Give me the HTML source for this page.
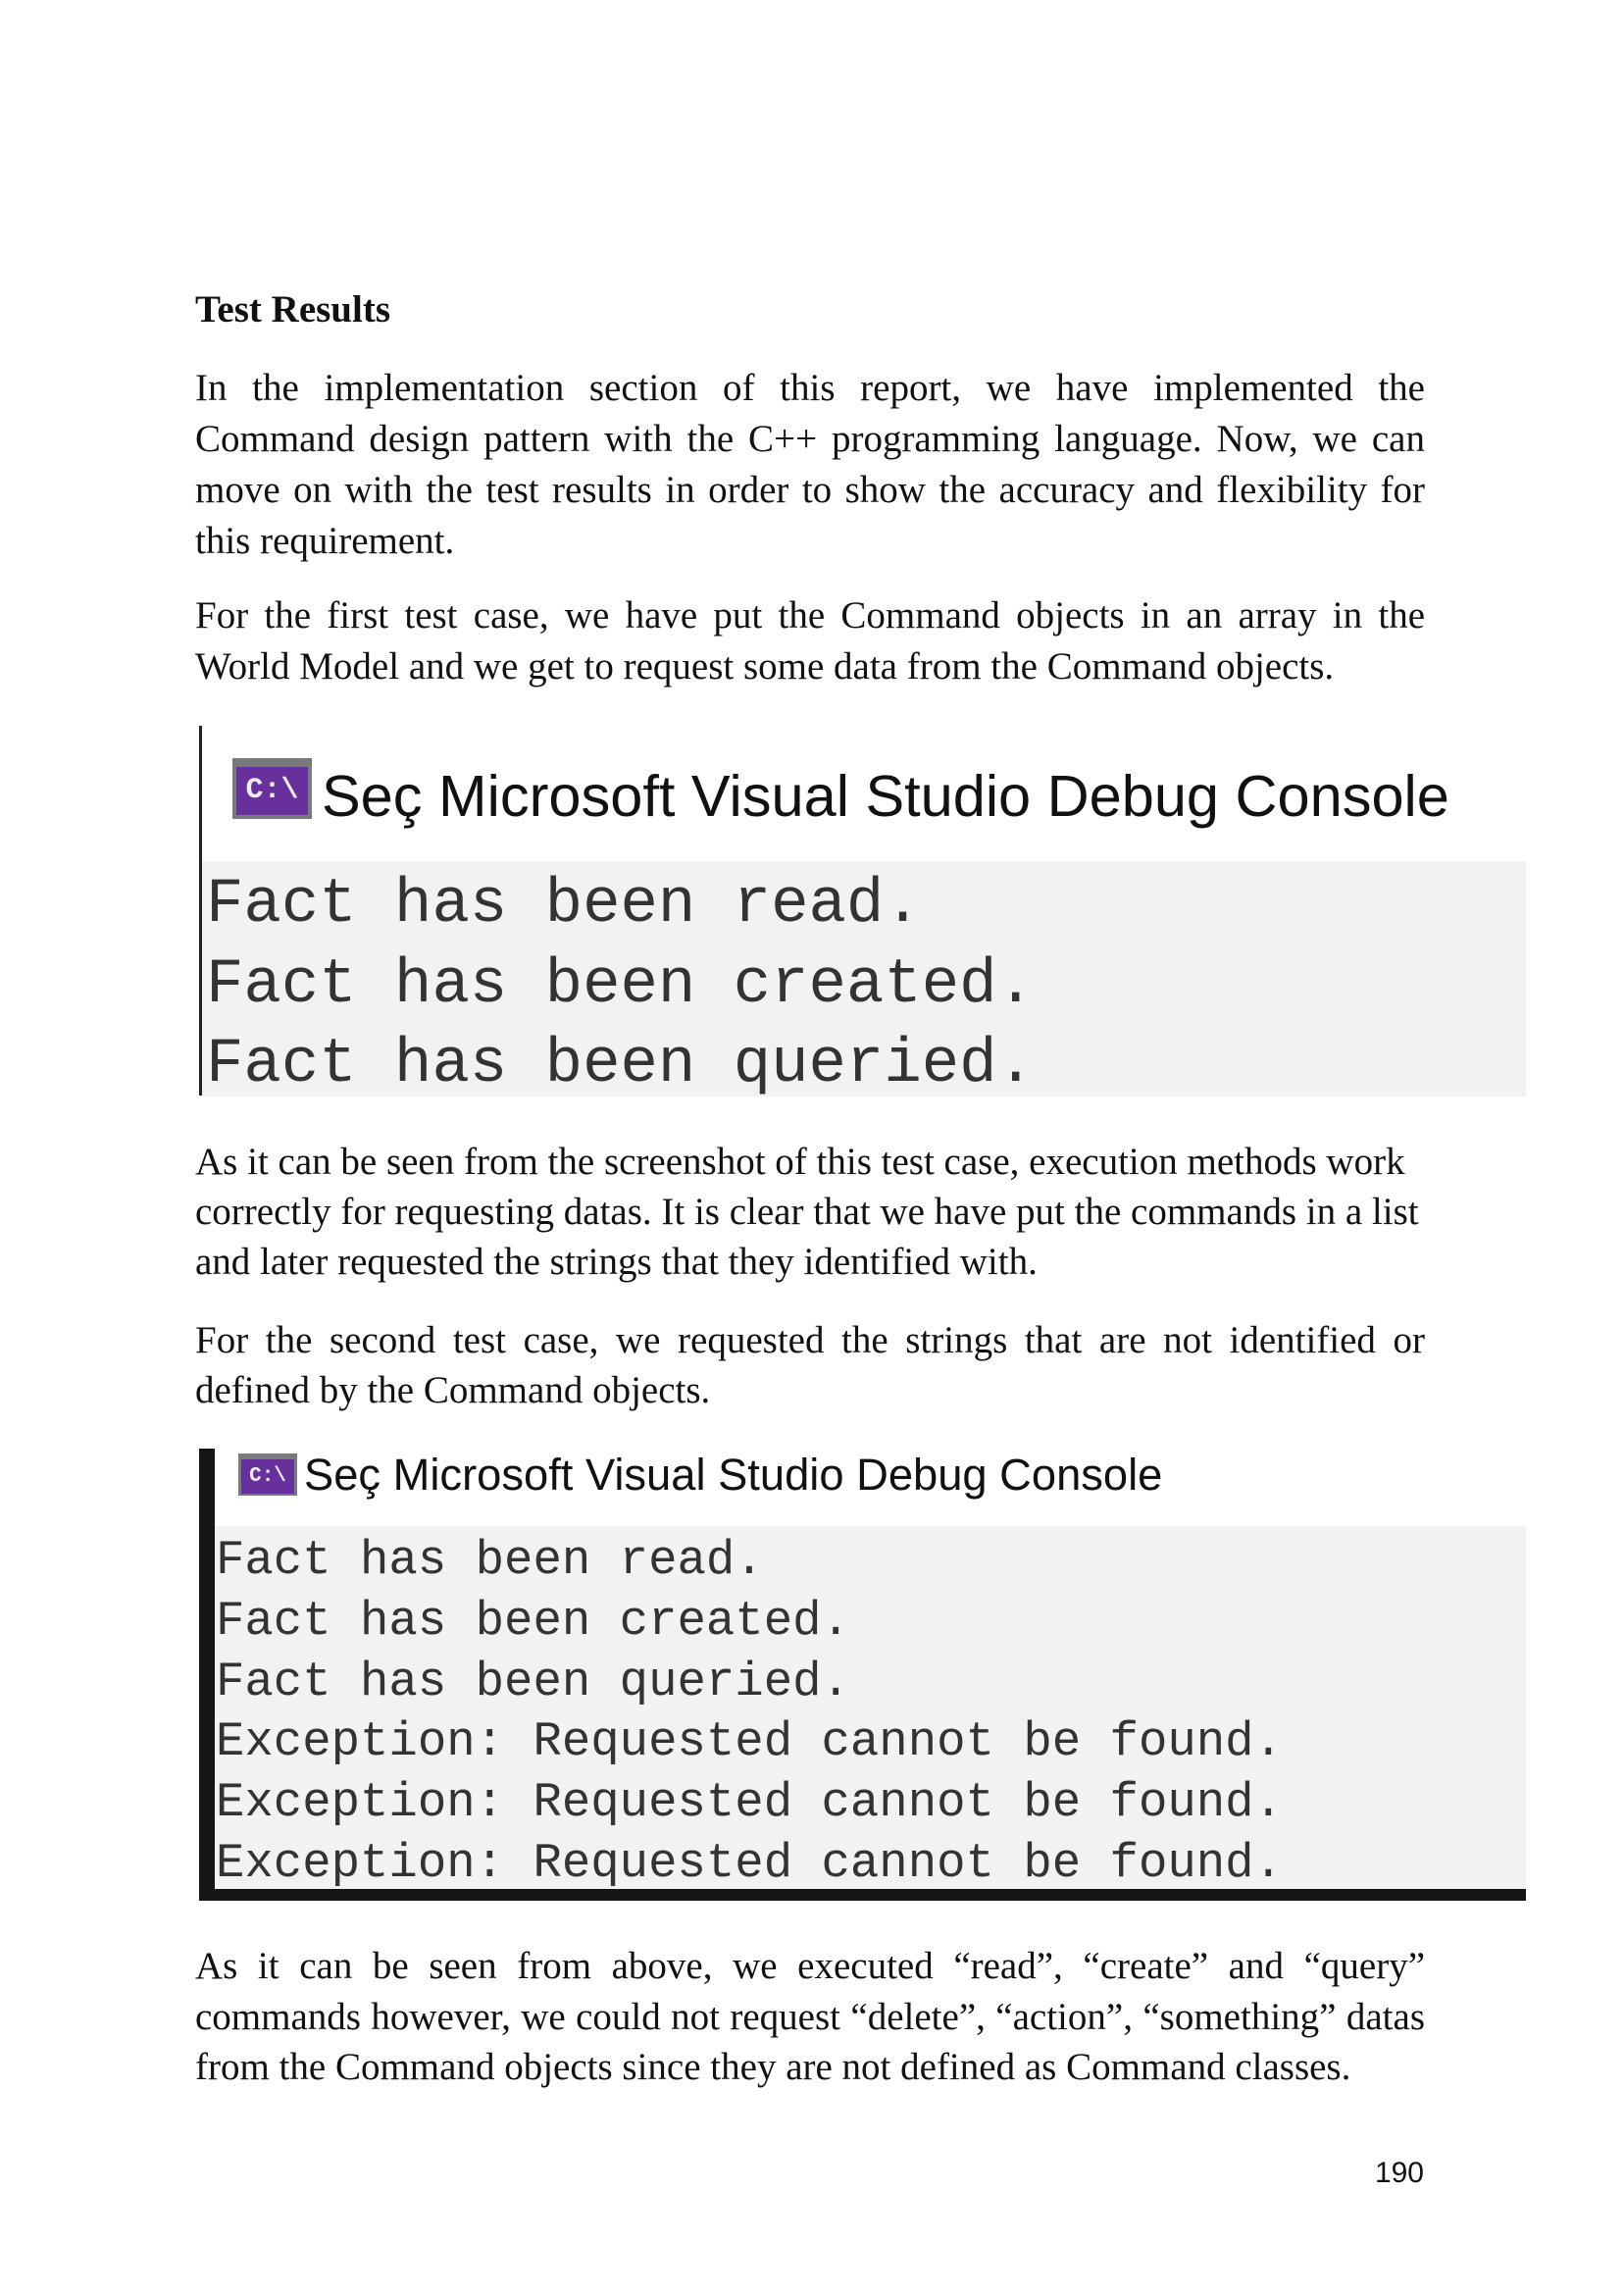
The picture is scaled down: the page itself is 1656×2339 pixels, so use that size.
<!DOCTYPE html>
<html><head><meta charset="utf-8"><style>
html,body{margin:0;padding:0;background:#fff}
body{width:1656px;height:2339px;position:relative;overflow:hidden;font-family:"Liberation Serif",serif;color:#111}
.l{position:absolute;left:199px;width:1254px;font-size:39px;line-height:52px;height:52px;white-space:nowrap}
.j{text-align:justify;text-align-last:justify;white-space:normal}
.h{font-weight:bold}
.bar{position:absolute;background:#222}
.gray{position:absolute;background:#f2f2f2}
.mono{position:absolute;font-family:"Liberation Mono",monospace;color:#333;white-space:pre}
.title{position:absolute;font-family:"Liberation Sans",sans-serif;color:#111;white-space:pre}
.icon{position:absolute;background:#7a7a7a;box-sizing:border-box}
.icon div{position:absolute;background:#68309c;color:#eee;font-family:"Liberation Mono",monospace;font-weight:bold;text-align:center}
</style></head><body>
<div class="l h" style="top:290px">Test Results</div>
<div class="l j" style="top:370px">In the implementation section of this report, we have implemented the</div>
<div class="l j" style="top:422px">Command design pattern with the C++ programming language. Now, we can</div>
<div class="l j" style="top:474px">move on with the test results in order to show the accuracy and flexibility for</div>
<div class="l" style="top:526px">this requirement.</div>
<div class="l j" style="top:602px">For the first test case, we have put the Command objects in an array in the</div>
<div class="l" style="top:654px">World Model and we get to request some data from the Command objects.</div>

<div class="bar" style="left:203px;top:740px;width:3px;height:377px"></div>
<div class="icon" style="left:237px;top:773px;width:81px;height:62px"><div style="left:4px;top:9px;width:73px;height:49px;font-size:30px;line-height:49px">C:\</div></div>
<div class="title" style="left:328px;top:776px;font-size:59.5px;line-height:72px">Seç Microsoft Visual Studio Debug Console</div>
<div class="gray" style="left:206px;top:878px;width:1350px;height:240px"></div>
<div class="mono" style="left:210px;top:883px;font-size:64px;line-height:81.5px">Fact has been read.
Fact has been created.
Fact has been queried.</div>

<div class="l" style="top:1159px">As it can be seen from the screenshot of this test case, execution methods work</div>
<div class="l" style="top:1210px">correctly for requesting datas. It is clear that we have put the commands in a list</div>
<div class="l" style="top:1261px">and later requested the strings that they identified with.</div>
<div class="l j" style="top:1341px">For the second test case, we requested the strings that are not identified or</div>
<div class="l" style="top:1392px">defined by the Command objects.</div>

<div class="bar" style="left:203px;top:1477px;width:16px;height:461px;background:#151515"></div>
<div class="bar" style="left:203px;top:1926px;width:1353px;height:12px;background:#151515"></div>
<div class="icon" style="left:243px;top:1482px;width:60px;height:43px"><div style="left:3px;top:6px;width:54px;height:35px;font-size:21px;line-height:35px">C:\</div></div>
<div class="title" style="left:310px;top:1476px;font-size:45.3px;line-height:56px">Seç Microsoft Visual Studio Debug Console</div>
<div class="gray" style="left:219px;top:1556px;width:1337px;height:370px"></div>
<div class="mono" style="left:220px;top:1561px;font-size:49px;line-height:61.8px">Fact has been read.
Fact has been created.
Fact has been queried.
Exception: Requested cannot be found.
Exception: Requested cannot be found.
Exception: Requested cannot be found.</div>

<div class="l j" style="top:1979px">As it can be seen from above, we executed “read”, “create” and “query”</div>
<div class="l j" style="top:2031px">commands however, we could not request “delete”, “action”, “something” datas</div>
<div class="l" style="top:2082px">from the Command objects since they are not defined as Command classes.</div>

<div style="position:absolute;left:1352px;width:100px;top:2199px;text-align:right;font-family:'Liberation Sans',sans-serif;font-size:30px;line-height:34px">190</div>
</body></html>
